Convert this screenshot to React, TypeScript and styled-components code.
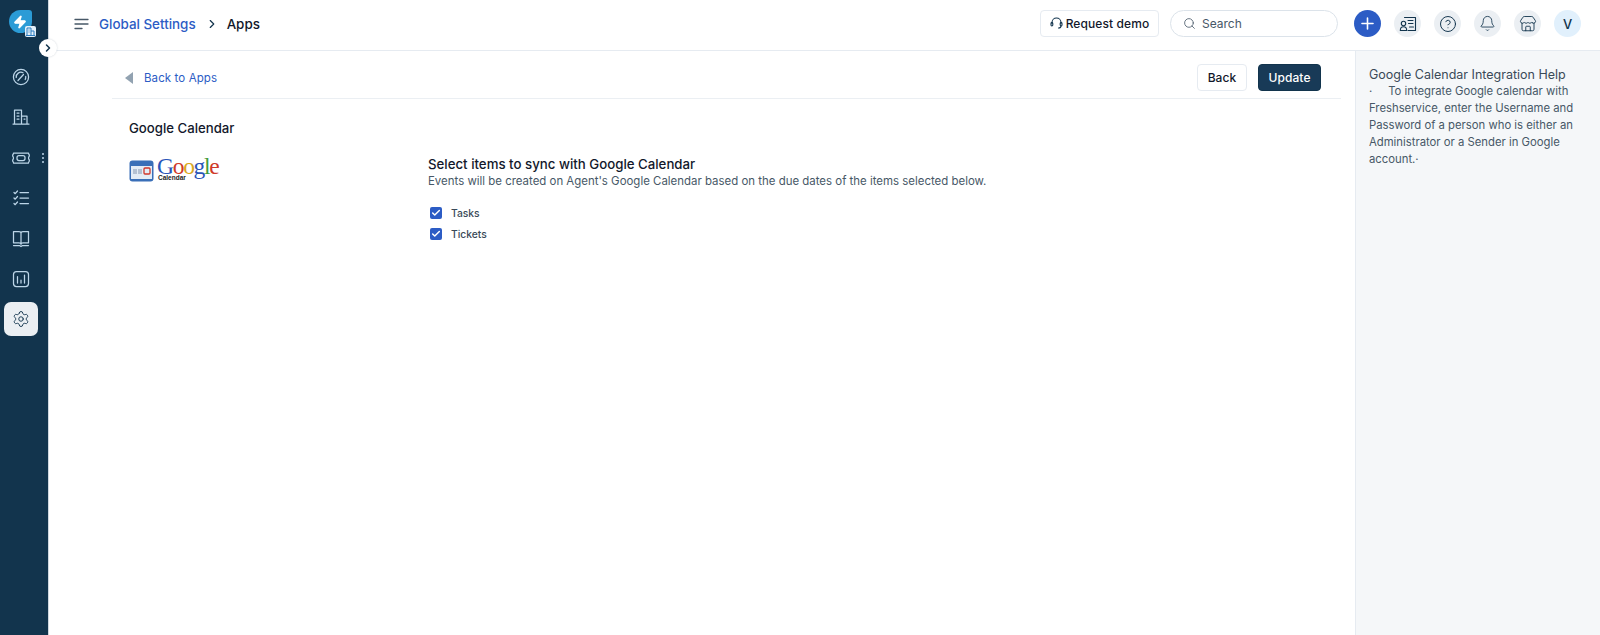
import React from "react";
import styled, { createGlobalStyle } from "styled-components";
import { Search, Plus, HelpCircle, Bell, Store, ChevronRight, Check, Settings, Zap } from "lucide-react";

const Global = createGlobalStyle`
  html, body { margin: 0; padding: 0; height: 100%; background: #fff; }
  body { font-family: Inter, "Liberation Sans", sans-serif; color: #12344d; overflow: hidden; }
  #root { height: 100%; }
  * { box-sizing: border-box; }
`;

const Page = styled.div`display: flex; width: 1600px; height: 635px; position: relative;`;
const Sidebar = styled.nav`
  width: 49px; flex: none; background: #12344d; display: flex; flex-direction: column; align-items: center;
  border-right: 1px solid #cfd7df; position: relative;
`;
const LogoWrap = styled.div`position: relative; width: 23px; height: 23px; margin: 10px 0 27px -8px; flex: none;`;
const LogoBlob = styled.div`
  width: 23px; height: 23px; background: #2b9bd6; border-radius: 50% 3px 50% 50%; display: flex; align-items: center; justify-content: center;
`;
const LogoBadge = styled.div`
  position: absolute; left: 16px; top: 16px; width: 11px; height: 11px; border-radius: 2px; background: #e4f0fa;
  display: flex; align-items: center; justify-content: center; color: #2b7cc0;
`;
const Toggle = styled.button`
  position: absolute; left: 39px; top: 39px; width: 18px; height: 18px; border-radius: 50%; border: none; padding: 0; background: #fff;
  display: flex; align-items: center; justify-content: center; color: #12344d; z-index: 2; box-shadow: 0 0 2px rgba(18,52,77,.2);
`;
const NavItem = styled.div<{ $active?: boolean }>`
  width: 34px; height: 34px; border-radius: 7px; display: flex; align-items: center; justify-content: center; margin-bottom: 6.4px; flex: none;
  color: ${p => (p.$active ? "#12344d" : "#bcd5e8")}; background: ${p => (p.$active ? "#ebeff3" : "transparent")}; position: relative; margin-left: -6px;
`;
const NavDots = styled.span`
  position: absolute; right: -6px; top: 12px; display: flex; flex-direction: column; gap: 2px;
  & i { width: 2px; height: 2px; border-radius: 50%; background: #bcd5e8; display: block; }
`;
const Right = styled.div`flex: 1; display: flex; flex-direction: column; min-width: 0;`;
const Header = styled.header`
  height: 51px; flex: none; border-bottom: 1px solid #e6ebf1; display: flex; align-items: center; padding: 0 19px 3px 25px;
`;
const Crumb = styled.a`font-size: 13.4px; font-weight: 500; color: #2c5cc5; margin-left: 10px;`;
const CrumbSep = styled.span`display: flex; margin: 0 8px 0 9px; color: #12344d;`;
const CrumbNow = styled.span`font-size: 13.4px; font-weight: 500; color: #12182b;`;
const Spacer = styled.div`flex: 1;`;
const Demo = styled.button`
  height: 27px; width: 119px; background: #fff; border: 1px solid #e6ebf1; border-radius: 4px; font: 500 12px Inter, sans-serif; letter-spacing: .1px; color: #12182b;
  display: flex; align-items: center; justify-content: center; gap: 3px; padding: 0; margin-right: 11px;
`;
const SearchBox = styled.div`
  width: 168px; height: 27px; border: 1px solid #dce3ea; border-radius: 14px; display: flex; align-items: center; padding-left: 12px; gap: 6px;
  font-size: 12px; color: #475867; margin-right: 16px;
`;
const Round = styled.div<{ $bg: string; $fg: string }>`
  width: 27px; height: 27px; border-radius: 50%; background: ${p => p.$bg}; color: ${p => p.$fg}; display: flex; align-items: center; justify-content: center;
  margin-right: 13px; font-size: 13px; font-weight: 500; flex: none;
  &:last-child { margin-right: 0; }
`;
const Body = styled.div`flex: 1; display: flex; min-height: 0;`;
const Main = styled.main`flex: 1; padding: 0 14px 0 63px; min-width: 0;`;
const Help = styled.aside`
  width: 245px; flex: none; background: #f5f7f9; border-left: 1px solid #e6ebf1; padding: 15px 12px 0 13px; font-size: 11.3px; line-height: 17px; color: #475867;
`;
const HelpTitle = styled.div`font-size: 12.5px; color: #3a4a58; line-height: 17px;`;
const Bar = styled.div`
  height: 48px; border-bottom: 1px solid #ebeff3; display: flex; align-items: center; padding: 5px 20px 0 12px;
`;
const BackLink = styled.a`font-size: 11.5px; color: #2c5cc5; margin: 1px 0 0 11px; letter-spacing: .1px;`;
const Tri = styled.span`width: 0; height: 0; border-top: 6px solid transparent; border-bottom: 6px solid transparent; border-right: 8px solid #92a2b1; margin: 1px 0 0 1px;`;
const Btn = styled.button<{ $primary?: boolean }>`
  height: 27px; border-radius: 4px; font: 500 12px Inter, sans-serif; letter-spacing: .1px; padding: 0; width: ${p => (p.$primary ? "63px" : "50px")};
  background: ${p => (p.$primary ? "#183a57" : "#fff")}; color: ${p => (p.$primary ? "#fff" : "#12182b")}; border: 1px solid ${p => (p.$primary ? "#12344d" : "#e6ebf1")};
  margin-left: 11px;
`;
const Section = styled.section`padding: 21px 0 0 17px;`;
const Title = styled.h2`margin: 0 0 17px; font-size: 13.2px; line-height: 17px; font-weight: 500; color: #12182b;`;
const Cols = styled.div`display: flex;`;
const LogoCol = styled.div`width: 299px; flex: none; display: flex; align-items: flex-start; gap: 3px;`;
const GIcon = styled.svg`flex: none; margin-top: 6px;`;
const GWords = styled.div`position: relative; width: 62px; height: 30px;`;
const GWord = styled.div`font: 23.5px/24px "Liberation Serif", serif; letter-spacing: -1.3px; white-space: nowrap;`;
const GLetter = styled.span<{ $c: string }>`color: ${p => p.$c};`;
const GSub = styled.div`position: absolute; left: 1px; top: 20px; font: 700 6.5px/8px "Liberation Sans", sans-serif; color: #222;`;
const FormCol = styled.div`padding-top: 1px;`;
const FormTitle = styled.h3`margin: 0; font-size: 13.25px; line-height: 19px; font-weight: 500; color: #12182b;`;
const FormHint = styled.p`margin: 0 0 13px; font-size: 11.44px; line-height: 15px; color: #475867;`;
const CheckRow = styled.label`display: flex; align-items: center; height: 21px; font-size: 10.3px; font-weight: 500; color: #3a4a58; padding-left: 1px;`;
const Box = styled.span`width: 12px; height: 12px; border-radius: 2px; background: #2c5cc5; color: #fff; display: flex; align-items: center; justify-content: center; margin-right: 9px; margin-left: 1px;`;

const Ico = ({ children }: { children: React.ReactNode }) => (
  <svg width="18" height="18" viewBox="0 0 18 18" fill="none" stroke="currentColor" strokeWidth="1.25" strokeLinecap="round" strokeLinejoin="round">{children}</svg>
);

export default function App() {
  return (
    <Page>
      <Global />
      <Sidebar>
        <LogoWrap>
          <LogoBlob><Zap size={14} color="#fff" fill="#fff" /></LogoBlob>
          <LogoBadge>
            <svg width="9" height="9" viewBox="0 0 9 9" fill="none" stroke="currentColor" strokeWidth="1"><path d="M1 8.500V1h4v7.500M5 4h3v4.500M0 8.500h9M2.500 3h1M2.500 5h1" /></svg>
          </LogoBadge>
        </LogoWrap>
        <Toggle><ChevronRight size={12} strokeWidth={3} /></Toggle>
        <NavItem>
          <Ico><circle cx="9" cy="9" r="7.6" /><path d="M4.200 9.500a4.800 4.800 0 0 1 6.800-4.800M13.700 8.500a4.800 4.800 0 0 1-.5 3M6 12.500l5.500-6" /></Ico>
        </NavItem>
        <NavItem>
          <Ico><path d="M2.500 16V2h7v14M9.500 8H15v8M1 16h16M5 5h2M5 8h2M5 11h2M12 11h1" /></Ico>
        </NavItem>
        <NavItem>
          <Ico><path d="M1.500 4h15c0 1 .4 1.600.8 1.800v1.400c-1 .5-1 3.100 0 3.600v1.400c-.4.200-.8.800-.8 1.800h-15c0-1-.4-1.600-.8-1.800v-1.400c1-.5 1-3.100 0-3.600V5.800C1.100 5.600 1.500 5 1.500 4z" /><rect x="5" y="6.500" width="8" height="5" rx="2" /></Ico>
          <NavDots><i /><i /><i /></NavDots>
        </NavItem>
        <NavItem>
          <Ico><path d="M8 3.500h8.500M8 9h8.500M8 14.500h8.500M2 3.500l1.200 1.200L5.500 2M2 9l1.200 1.200L5.500 7.500M2 14.500l1.200 1.200L5.500 13" /></Ico>
        </NavItem>
        <NavItem>
          <Ico><path d="M1.500 1.500H7c1 0 2 .6 2 1.800v11c0-1-1-1.500-2-1.500H1.500zM16.500 1.500H11c-1 0-2 .6-2 1.800v11c0-1 1-1.500 2-1.500h5.500zM1.500 15.500H7.500l1.500 1 1.500-1h6" /></Ico>
        </NavItem>
        <NavItem>
          <Ico><rect x="1.500" y="1.500" width="15" height="15" rx="3" /><path d="M5.500 6.500v6.500M9 10v3M12.500 5v8" /></Ico>
        </NavItem>
        <NavItem $active><Settings size={18} strokeWidth={1.25} /></NavItem>
      </Sidebar>
      <Right>
        <Header>
          <svg width="15" height="12" viewBox="0 0 15 12" fill="none" stroke="#475867" strokeWidth="1.3" strokeLinecap="round"><path d="M1 1.500h13M1 6h13M1 10.500h7" /></svg>
          <Crumb>Global Settings</Crumb>
          <CrumbSep><ChevronRight size={14} strokeWidth={2} /></CrumbSep>
          <CrumbNow>Apps</CrumbNow>
          <Spacer />
          <Demo>
            <svg width="13" height="14" viewBox="0 0 13 14" fill="none" stroke="#12344d" strokeWidth="1.1" strokeLinecap="round"><path d="M2 6.500V5.500a4.500 4.500 0 0 1 9 0v1" /><rect x="1" y="5.500" width="1.800" height="3.500" rx=".9" /><rect x="10.200" y="5.500" width="1.800" height="3.500" rx=".9" /><path d="M11 9c0 1.500-1 2-2.500 2" /></svg>
            Request demo
          </Demo>
          <SearchBox><Search size={13} strokeWidth={1.5} />Search</SearchBox>
          <Round $bg="#2c5cc5" $fg="#fff"><Plus size={19} strokeWidth={2} /></Round>
          <Round $bg="#ebeff3" $fg="#12344d">
            <svg width="18" height="18" viewBox="0 0 18 18" fill="none" stroke="currentColor" strokeWidth="1.1" strokeLinecap="round" strokeLinejoin="round"><path d="M5.500 2.500h11V15.500H9M9 5.500h5M9.500 8.500h4.500M10.500 12h4" /><circle cx="4.500" cy="8.500" r="2.200" /><path d="M1.300 15.500c0-3 1-3.800 3.200-3.800s3.200.8 3.200 3.800z" /></svg>
          </Round>
          <Round $bg="#ebeff3" $fg="#12344d"><HelpCircle size={18} strokeWidth={1.3} /></Round>
          <Round $bg="#ebeff3" $fg="#12344d"><Bell size={17} strokeWidth={1.2} /></Round>
          <Round $bg="#ebeff3" $fg="#12344d"><Store size={18} strokeWidth={1.2} /></Round>
          <Round $bg="#e1f0fc" $fg="#12344d">V</Round>
        </Header>
        <Body>
          <Main>
            <Bar>
              <Tri />
              <BackLink>Back to Apps</BackLink>
              <Spacer />
              <Btn>Back</Btn>
              <Btn $primary>Update</Btn>
            </Bar>
            <Section>
              <Title>Google Calendar</Title>
              <Cols>
                <LogoCol>
                  <GIcon width="25" height="22" viewBox="0 0 25 22">
                    <rect x="0.500" y="0.500" width="24" height="21" rx="3" fill="#3a6fb8" />
                    <rect x="2" y="6" width="21" height="13" fill="#e4ecf6" />
                    <rect x="4" y="9" width="4" height="5" fill="#b4c1d3" />
                    <rect x="9" y="9" width="4" height="5" fill="#b4c1d3" />
                    <rect x="15" y="8" width="6" height="6" rx="1" fill="none" stroke="#d0362a" strokeWidth="1.300" />
                  </GIcon>
                  <GWords>
                    <GWord>
                      <GLetter $c="#2a55b8">G</GLetter><GLetter $c="#cf3a2a">o</GLetter><GLetter $c="#d9a821">o</GLetter><GLetter $c="#2a55b8">g</GLetter><GLetter $c="#3f9a3a">l</GLetter><GLetter $c="#cf3a2a">e</GLetter>
                    </GWord>
                    <GSub>Calendar</GSub>
                  </GWords>
                </LogoCol>
                <FormCol>
                  <FormTitle>Select items to sync with Google Calendar</FormTitle>
                  <FormHint>Events will be created on Agent's Google Calendar based on the due dates of the items selected below.</FormHint>
                  <CheckRow><Box><Check size={10} strokeWidth={3.5} /></Box>Tasks</CheckRow>
                  <CheckRow><Box><Check size={10} strokeWidth={3.5} /></Box>Tickets</CheckRow>
                </FormCol>
              </Cols>
            </Section>
          </Main>
          <Help>
            <HelpTitle>Google Calendar Integration Help</HelpTitle>
            ·&nbsp;&nbsp;&nbsp;&nbsp; To integrate Google calendar with Freshservice, enter the Username and Password of a person who is either an Administrator or a Sender in Google account.·
          </Help>
        </Body>
      </Right>
    </Page>
  );
}
